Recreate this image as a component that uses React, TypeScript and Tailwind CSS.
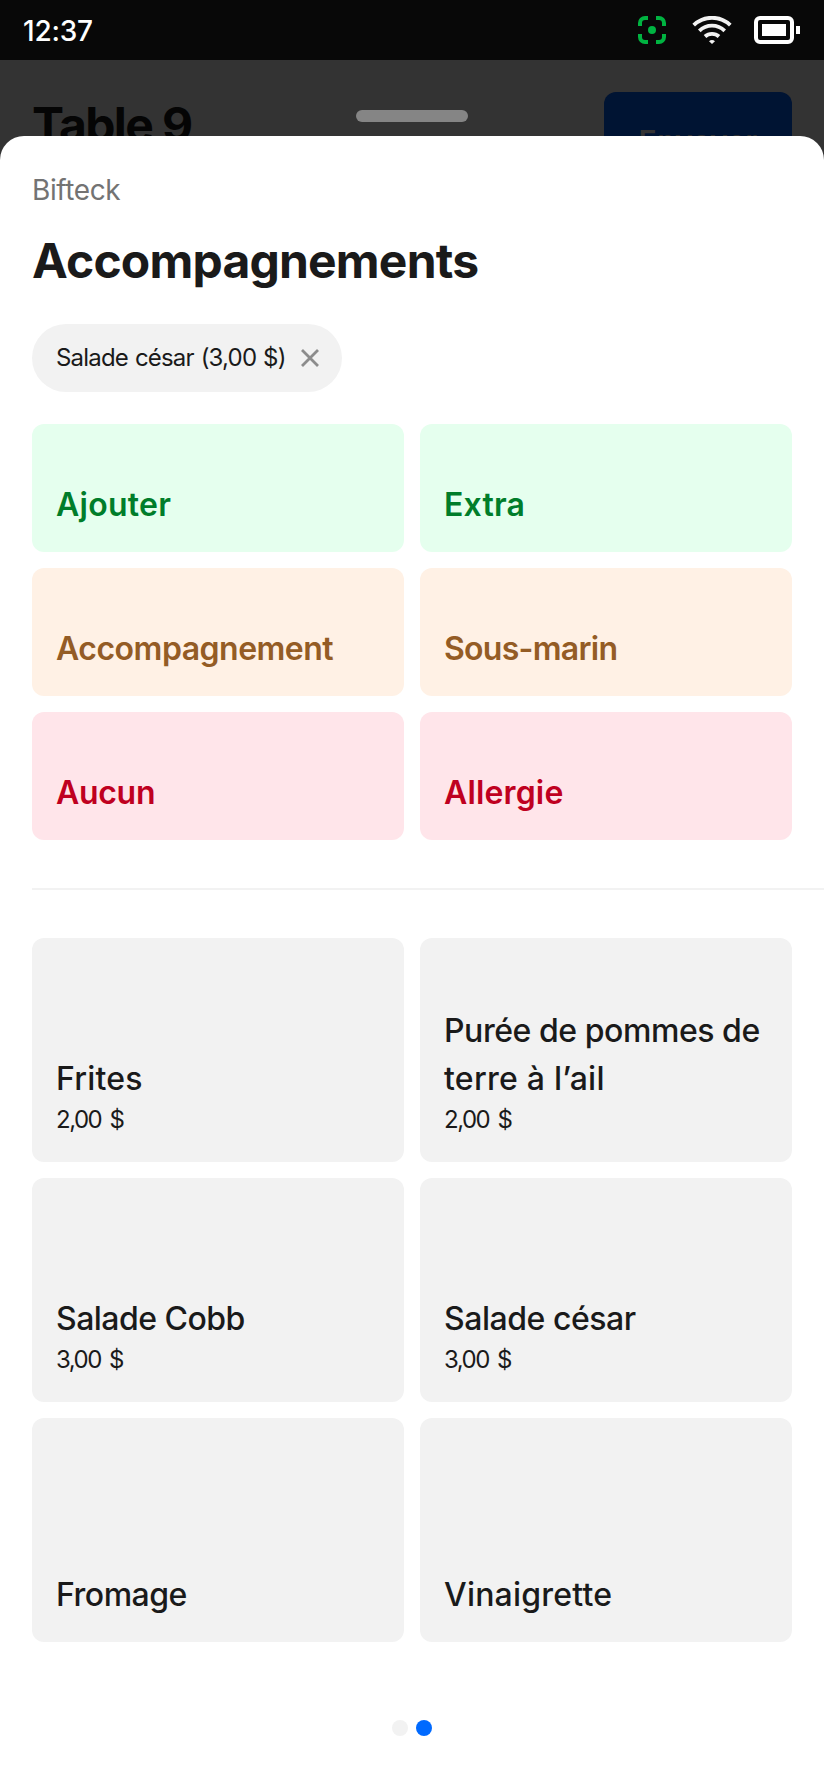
import React from 'react';

interface Modifier {
  label: string;
  tone: string;
  spacing: string;
}

interface Item {
  lines: { text: string; spacing: string }[];
  price?: string;
}

const modifiers: Modifier[] = [
  { label: 'Ajouter', tone: 'bg-[#e5ffee] text-[#007d2a]', spacing: 'tracking-[0.25px]' },
  { label: 'Extra', tone: 'bg-[#e5ffee] text-[#007d2a]', spacing: 'tracking-[0.2px]' },
  { label: 'Accompagnement', tone: 'bg-[#fff1e5] text-[#945c25]', spacing: 'tracking-[-0.5px]' },
  { label: 'Sous-marin', tone: 'bg-[#fff1e5] text-[#945c25]', spacing: 'tracking-[-0.72px]' },
  { label: 'Aucun', tone: 'bg-[#ffe5ea] text-[#bf0020]', spacing: 'tracking-[-0.3px]' },
  { label: 'Allergie', tone: 'bg-[#ffe5ea] text-[#bf0020]', spacing: 'tracking-[0.15px]' },
];

const items: Item[] = [
  { lines: [{ text: 'Frites', spacing: 'tracking-[0.2px]' }], price: '2,00 $' },
  {
    lines: [
      { text: 'Purée de pommes de', spacing: 'tracking-[-0.45px]' },
      { text: 'terre à l’ail', spacing: 'tracking-[0.26px]' },
    ],
    price: '2,00 $',
  },
  { lines: [{ text: 'Salade Cobb', spacing: 'tracking-[-0.52px]' }], price: '3,00 $' },
  { lines: [{ text: 'Salade césar', spacing: 'tracking-[-0.47px]' }], price: '3,00 $' },
  { lines: [{ text: 'Fromage', spacing: 'tracking-[-0.5px]' }] },
  { lines: [{ text: 'Vinaigrette', spacing: 'tracking-[0.2px]' }] },
];

const StatusBar: React.FC = () => (
  <div className="flex h-[60px] items-center justify-between bg-[#080808] pr-6 pl-[23px] text-white">
    <span className="pt-px text-[28px] leading-[60px] font-medium tracking-[-0.2px]">12:37</span>
    <div className="flex items-center">
      <svg width="28" height="28" viewBox="0 0 28 28" fill="none" className="mr-[26px]">
        <path
          d="M2 10V7a5 5 0 0 1 5-5h3M18 2h3a5 5 0 0 1 5 5v3M26 18v3a5 5 0 0 1-5 5h-3M10 26H7a5 5 0 0 1-5-5v-3"
          stroke="#00b341"
          strokeWidth="4"
        />
        <circle cx="14" cy="14" r="4" fill="#00b341" />
      </svg>
      <svg width="40" height="28" viewBox="0 0 40 28" fill="none" className="mr-[22px]">
        <path
          d="M1.7 9.1C12 -.7 28 -.7 38.3 9.1M7.3 14.8C14.5 8 25.5 8 32.7 14.8M13 20.5C17 16.9 23 16.9 27 20.5"
          stroke="#f2f2f2"
          strokeWidth="3.8"
        />
        <path d="M17 25.2C18.7 23.7 21.3 23.7 23 25.2L20 28Z" fill="#f2f2f2" />
      </svg>
      <svg width="46" height="28" viewBox="0 0 46 28" fill="none">
        <rect x="2" y="2" width="36" height="24" rx="4" stroke="white" strokeWidth="4" />
        <path d="M8 8h24v12H8zM42 10h4v8h-4z" fill="white" />
      </svg>
    </div>
  </div>
);

const App: React.FC = () => {
  return (
    <div className="h-[1784px] w-[824px] overflow-hidden bg-[#333333] font-['Inter','Liberation_Sans',sans-serif] text-[#1a1a1a]">
      <StatusBar />

      {/* Dimmed order screen behind the sheet */}
      <div className="relative flex h-[76px] items-start justify-between overflow-hidden px-8">
        <div className="pt-[35px] text-[48px] leading-[60px] font-bold tracking-[-1.6px] text-[#050505]">Table 9</div>
        <div className="mt-8 flex h-24 w-[188px] items-center justify-center rounded-xl bg-[#001433] pt-0.5">
          <span className="text-[30px] font-semibold tracking-[0.2px] text-[#333333]">Envoyer</span>
        </div>
        <div className="absolute top-[50px] left-[356px] h-3 w-28 rounded-full bg-[#858585]" />
      </div>

      {/* Sheet */}
      <div className="flex h-[1648px] flex-col rounded-t-[24px] bg-white pt-9 pl-8">
        <div className="text-[28px] leading-9 tracking-[-0.4px] text-[#737373]">Bifteck</div>
        <h1 className="mt-[23px] text-[48px] leading-[60px] font-bold tracking-[-0.8px]">Accompagnements</h1>

        <button className="mt-[33px] flex h-[68px] w-[310px] items-center justify-between rounded-full bg-[#f2f2f2] pr-[22px] pl-6">
          <span className="text-[24px] leading-9 tracking-[-0.8px] [word-spacing:0.9px]">Salade césar (3,00 $)</span>
          <svg width="20" height="20" viewBox="0 0 20 20" fill="none">
            <path d="M2 2l16 16M18 2L2 18" stroke="#8c8c8c" strokeWidth="2.8" />
          </svg>
        </button>

        <div className="mt-8 mr-8 grid grid-cols-2 gap-4">
          {modifiers.map((modifier) => (
            <div key={modifier.label} className={`flex h-32 items-end rounded-xl px-6 pb-[23px] ${modifier.tone}`}>
              <span className={`text-[32px] leading-[48px] font-semibold ${modifier.spacing}`}>{modifier.label}</span>
            </div>
          ))}
        </div>

        <div className="my-12 h-0.5 shrink-0 bg-[#f2f2f2]" />

        <div className="mr-8 grid grid-cols-2 gap-4">
          {items.map((item) => (
            <div key={item.lines[0].text} className="flex h-56 flex-col justify-end rounded-xl bg-[#f2f2f2] px-6 pb-[23px]">
              {item.lines.map((line) => (
                <span key={line.text} className={`text-[32px] leading-[48px] font-medium ${line.spacing}`}>
                  {line.text}
                </span>
              ))}
              {item.price && (
                <span className="-mt-px mb-px text-[24px] leading-9 tracking-[-1.5px] [word-spacing:3px]">{item.price}</span>
              )}
            </div>
          ))}
        </div>

        {/* Page dots */}
        <div className="mt-[78px] mr-8 flex justify-center gap-2">
          <span className="size-4 rounded-full bg-[#f2f2f2]" />
          <span className="size-4 rounded-full bg-[#006aff]" />
        </div>
      </div>
    </div>
  );
};

export default App;
